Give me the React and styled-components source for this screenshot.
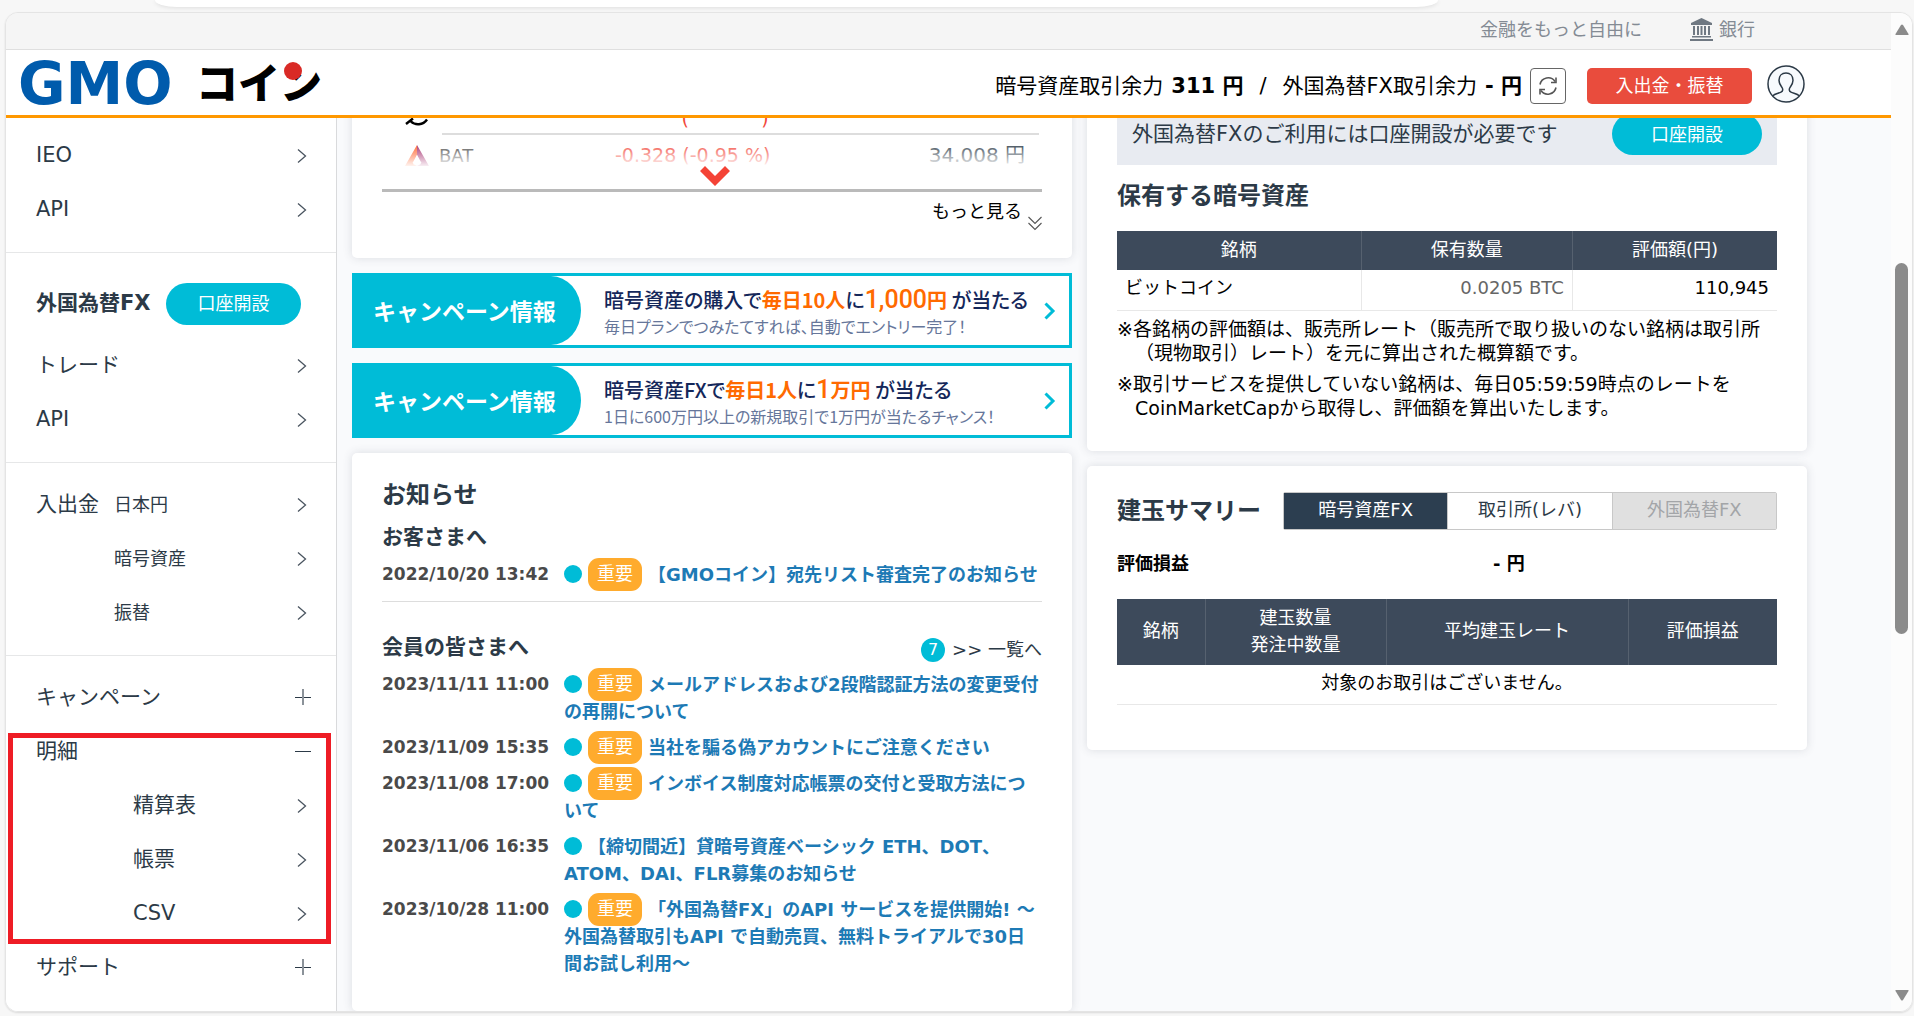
import React from "react";
import styled, { createGlobalStyle } from "styled-components";

const GlobalStyle = createGlobalStyle`
  *, *::before, *::after { box-sizing: border-box; }
  html, body { margin: 0; height: 100%; }
  body {
    background: #f7f7f7;
    color: #000;
    font-family: "DejaVu Sans", "Noto Sans CJK JP", sans-serif;
    font-size: 18px;
    line-height: 27px;
    overflow: hidden;
  }
  h2, h3, p, ul, dl, dd, dt { margin: 0; padding: 0; }
  ul { list-style: none; }
  a { color: inherit; text-decoration: none; }
  button { font: inherit; color: inherit; cursor: pointer; }
  svg { display: block; flex: none; }
`;

const cyan = "#00bcd7";
const ink = "#2c3a47";

/* ---------- browser frame ---------- */
const Screen = styled.div`
  height: 100vh;
  display: flex;
  flex-direction: column;
  padding: 0 1px 4px 5px;
  overflow: hidden;
`;
const AddressStrip = styled.div`
  height: 7px;
  margin: 0 475px 5px 150px;
  background: #fff;
  border-radius: 0 0 22px 22px / 0 0 7px 7px;
  box-shadow: 0 1px 4px rgba(0, 0, 0, 0.1);
  flex: none;
`;
const Viewport = styled.div`
  flex: 1;
  min-height: 0;
  display: flex;
  border: 1px solid #e4e4e4;
  border-radius: 13px;
  overflow: hidden;
  box-shadow: 0 1px 2px rgba(0, 0, 0, 0.12);
`;
const Page = styled.div`
  flex: 1;
  min-width: 0;
  display: flex;
  flex-direction: column;
`;
const ScrollTrack = styled.div`
  width: 21px;
  background: #fcfcfc;
  display: flex;
  flex-direction: column;
  align-items: center;
  justify-content: space-between;
  padding: 11px 0 10px;
`;
const ScrollBody = styled.div`
  flex: 1;
  padding-top: 228px;
`;
const ScrollThumb = styled.div`
  width: 13px;
  height: 371px;
  border-radius: 7px;
  background: #8b8b8b;
`;

/* ---------- header ---------- */
const TopBar = styled.div`
  height: 37px;
  flex: none;
  display: flex;
  justify-content: flex-end;
  align-items: center;
  gap: 48px;
  padding: 0 136px 4px 0;
  background: #f5f5f5;
  border-bottom: 1px solid #dfdfdf;
  color: #848b94;
`;
const BankLink = styled.a`
  display: flex;
  align-items: center;
  gap: 6px;
`;
const Header = styled.header`
  height: 68px;
  flex: none;
  display: flex;
  align-items: center;
  padding: 2px 86px 0 12px;
  background: #fff;
  border-bottom: 3px solid #ff9800;
  position: relative;
  z-index: 2;
`;
const LogoLink = styled.a`
  margin-right: auto;
`;
const Balance = styled.p`
  display: flex;
  gap: 8px;
  font-size: 21px;
  padding-top: 5px;
  margin-right: 8px;
`;
const Slash = styled.span`
  margin: 0 8px;
`;
const RefreshButton = styled.button`
  width: 36px;
  height: 36px;
  display: grid;
  place-items: center;
  padding: 0;
  background: #fff;
  border: 1px solid #666;
  border-radius: 4px;
  margin-right: 21px;
  margin-top: 4px;
`;
const TransferButton = styled.button`
  width: 165px;
  height: 36px;
  padding: 0;
  border: 0;
  border-radius: 5px;
  background: #e94c3d;
  color: #fff;
  margin-right: 15px;
  margin-top: 4px;
`;
const AccountButton = styled.button`
  padding: 0;
  border: 0;
  background: none;
`;

/* ---------- sidebar ---------- */
const Body = styled.div`
  flex: 1;
  min-height: 0;
  display: flex;
  background: #f9fafc;
`;
const Sidebar = styled.nav`
  width: 331px;
  flex: none;
  background: #fff;
  border-right: 1px solid #d9dadc;
  color: ${ink};
  overflow: hidden;
`;
const MenuSection = styled.section`
  padding: ${(p) => (p.$first ? 10 : 14)}px 0 16px;
  border-bottom: ${(p) => (p.$last ? 0 : 1)}px solid #e6e7e8;
`;
const MenuRow = styled.a`
  height: 54px;
  display: flex;
  align-items: center;
  padding: 0 29px 0 ${(p) => (p.$sub ? 127 : 30)}px;
  font-size: 21px;
`;
const MenuToggle = styled.button`
  width: 100%;
  height: 54px;
  display: flex;
  align-items: center;
  padding: 0 25px 0 30px;
  border: 0;
  background: none;
  font-size: 21px;
`;
const MenuName = styled.span`
  flex: 1;
  text-align: left;
`;
const GroupName = styled.span`
  width: 78px;
`;
const SmallName = styled.span`
  flex: 1;
  font-size: 18px;
`;
const FxHead = styled.div`
  height: 71px;
  display: flex;
  align-items: center;
  justify-content: space-between;
  padding: 2px 35px 0 30px;
  font-size: 21px;
  font-weight: 700;
`;
const OpenButton = styled.button`
  width: ${(p) => p.$w}px;
  height: 42px;
  flex: none;
  padding: 0;
  border: 0;
  border-radius: 21px;
  background: ${cyan};
  color: #fff;
  font-size: 18px;
  font-weight: 400;
`;
const MarkedGroup = styled.div`
  position: relative;
`;
const Marker = styled.div`
  position: absolute;
  inset: 9px 5px -4px 2px;
  border: 5px solid #ee1c25;
  pointer-events: none;
`;

/* ---------- main ---------- */
const Main = styled.main`
  flex: 1;
  min-width: 0;
  display: grid;
  grid-template-columns: 1fr 1fr;
  gap: 15px;
  padding: 0 84px 0 15px;
  margin-top: -15px;
`;
const Column = styled.div`
  min-width: 0;
  min-height: 0;
  display: flex;
  flex-direction: column;
  gap: 15px;
`;
const Card = styled.section`
  background: #fff;
  border-radius: 5px;
  padding: 0 30px;
  box-shadow: 0 0 10px rgba(60, 70, 90, 0.16);
  flex: ${(p) => (p.$grow ? 1 : "none")};
`;

/* rates */
const Rates = styled.div`
  height: 89px;
  padding: 0 3px 0 23px;
  display: flex;
  flex-direction: column;
  border-bottom: 3px solid #bababa;
  position: relative;
`;
const RateRow = styled.div`
  display: grid;
  grid-template-columns: 34px 1fr 220px 204px;
  align-items: center;
  height: ${(p) => p.$h}px;
`;
const RateRule = styled.div`
  height: 2px;
  margin-left: 37px;
  background: #ddd;
`;
const RateName = styled.span`
  color: #444;
`;
const RateChange = styled.span`
  color: #f2483b;
  font-size: 19px;
  white-space: pre;
`;
const RatePrice = styled.span`
  color: ${ink};
  font-size: 20px;
  text-align: right;
  padding-right: 14px;
`;
const Fade = styled.div`
  position: absolute;
  inset: 33px 0 0 0;
  display: flex;
  align-items: flex-end;
  justify-content: center;
  padding: 0 0 3px 6px;
  background: linear-gradient(rgba(255, 255, 255, 0.1) 8px, #fff 32px);
`;
const MoreLink = styled.a`
  display: flex;
  justify-content: flex-end;
  align-items: center;
  gap: 6px;
  height: 66px;
  padding-bottom: 27px;
  svg { align-self: flex-end; }
`;

/* banners */
const Banner = styled.a`
  height: 75px;
  flex: none;
  display: flex;
  align-items: center;
  background: #fff;
  border: 3px solid ${cyan};
  padding-right: 13px;
  font-family: "Noto Sans CJK JP", sans-serif;
  font-feature-settings: "palt";
`;
const BannerTag = styled.span`
  width: 226px;
  height: 100%;
  flex: none;
  display: grid;
  align-items: center;
  padding-left: 18px;
  background: ${cyan};
  border-radius: 0 30px 30px 0 / 0 50% 50% 0;
  color: #fff;
  font-size: 23px;
  font-weight: 700;
  font-feature-settings: normal;
`;
const BannerText = styled.span`
  flex: 1;
  padding-left: 23px;
  white-space: nowrap;
`;
const BannerLead = styled.span`
  display: block;
  color: #14275a;
  font-size: 20px;
  font-weight: 500;
  line-height: 30px;
`;
const Hot = styled.b`
  color: #ff6a00;
  font-weight: 700;
`;
const HotNumber = styled.span`
  color: #ff6a00;
  font-family: Roboto, sans-serif;
  font-size: 25px;
  font-weight: 500;
`;
const BannerSub = styled.span`
  display: block;
  color: #66769a;
  font-size: 16px;
  line-height: 22px;
`;

/* headings and news */
const Title = styled.h2`
  color: ${ink};
  font-size: 24px;
  line-height: 36px;
  font-weight: 700;
`;
const SubTitle = styled.h3`
  color: ${ink};
  font-size: 21px;
  line-height: 30px;
  font-weight: 700;
`;
const NewsList = styled.ul`
  display: flex;
  flex-direction: column;
  gap: 9px;
  font-weight: 700;
`;
const NewsItem = styled.li`
  display: grid;
  grid-template-columns: 182px 1fr;
`;
const NewsDate = styled.time`
  color: #4a4a4a;
  font-size: 17px;
`;
const NewsLink = styled.a`
  color: #1d7ab5;
`;
const Dot = styled.i`
  display: inline-block;
  width: 18px;
  height: 18px;
  margin-right: 6px;
  border-radius: 50%;
  background: ${cyan};
  vertical-align: -2px;
`;
const Badge = styled.span`
  display: inline-block;
  height: 33px;
  line-height: 31px;
  padding: 0 9px;
  margin: -8px 6px -4px 0;
  border-radius: 11px;
  background: #ffab2d;
  color: #fff;
  font-weight: 400;
  vertical-align: middle;
`;
const NewsTop = styled.div`
  display: flex;
  flex-direction: column;
  padding: 24px 0 13px;
  border-bottom: 1px solid #ddd;
  gap: 9px;
`;
const NewsHead = styled.div`
  display: flex;
  align-items: center;
  justify-content: space-between;
  padding: 28px 0 8px;
`;
const ListLink = styled.a`
  display: flex;
  align-items: center;
  gap: 7px;
  padding-top: 6px;
  color: ${ink};
`;
const Count = styled.span`
  width: 24px;
  height: 24px;
  line-height: 24px;
  border-radius: 50%;
  background: ${cyan};
  color: #fff;
  font-size: 16px;
  text-align: center;
`;

/* right column */
const Notice = styled.div`
  display: flex;
  align-items: center;
  justify-content: space-between;
  height: 62px;
  padding: 0 15px;
  background: #e8ebf1;
  color: ${ink};
  font-size: 21px;
`;
const HoldingHead = styled.div`
  padding: 13px 0 17px;
`;
const Table = styled.table`
  width: 100%;
  border-collapse: collapse;
  table-layout: fixed;
  th {
    height: ${(p) => p.$head}px;
    padding: 0 0 2px;
    background: #3d4a5b;
    color: #fff;
    font-weight: 400;
    text-align: center;
  }
  td {
    height: 40px;
    padding: 0 8px 4px;
    border-bottom: 1px solid #e8e8e8;
  }
  th + th { border-left: 1px solid #56616f; }
  td + td { border-left: 1px solid #e8e8e8; }
`;
const Cell = styled.td`
  text-align: ${(p) => p.$align || "left"};
  color: ${(p) => (p.$muted ? "#666" : "#000")};
`;
const Notes = styled.div`
  padding: 6px 0 31px;
  display: flex;
  flex-direction: column;
  gap: 7px;
  font-size: 19px;
  line-height: 24px;
`;
const Note = styled.p`
  padding-left: 18px;
  text-indent: -18px;
`;
const SummaryHead = styled.div`
  display: flex;
  align-items: center;
  gap: 22px;
  padding: 26px 0 20px;
`;
const Tabs = styled.div`
  flex: 1;
  height: 38px;
  display: flex;
  border: 1px solid #c8c8c8;
  border-radius: 2px;
`;
const Tab = styled.button`
  flex: 1;
  padding: 0 0 2px;
  border: 0;
  border-right: ${(p) => (p.$last ? 0 : 1)}px solid #c8c8c8;
  background: ${(p) => (p.$on ? "#2c3e50" : p.disabled ? "#e0e0e0" : "#fff")};
  color: ${(p) => (p.$on ? "#fff" : p.disabled ? "#a3a5a8" : ink)};
`;
const ProfitRow = styled.dl`
  display: grid;
  grid-template-columns: 1fr 1fr;
  padding-bottom: 22px;
  font-weight: 700;
  dd { padding-left: 46px; }
`;
const TableEnd = styled.div`
  height: 45px;
`;

/* ---------- icons ---------- */
const Chevron = () => (
  <svg width="10" height="15" viewBox="0 0 10 15" fill="none" stroke="#4a5560" strokeWidth="1.3">
    <path d="M1 1.5 8.5 8 1 14.5" />
  </svg>
);
const Sign = ({ plus }) => (
  <svg width="16" height="16" viewBox="0 0 16 16" fill="none" strokeWidth="1">
    <path d="M0 8.5H16" stroke="#2c3a47" />
    {plus && <path d="M8 0V16" stroke="#8b9299" strokeWidth="2" />}
  </svg>
);
const Bank = () => (
  <svg width="23" height="23" viewBox="0 0 23 23" fill="#6f7882">
    <path d="M11.5 0 22 5v2H1V5z" />
    <path d="M3 8h2v9H3zM7 8h2v9H7zM10.500 8h2v9h-2zM14 8h2v9h-2zM18 8h2v9h-2zM2 18h19v1.500H2zM0 21h23v2H0z" />
  </svg>
);
const Refresh = () => (
  <svg width="22" height="22" viewBox="0 0 22 22" fill="none" stroke="#555" strokeWidth="1.6">
    <path d="M3 9.500A8.300 8.300 0 0 1 18 6.500M19 12.500A8.300 8.300 0 0 1 4 15.500" />
    <path d="M19 2.500V7.500H14M3 19.500V14.500H8" />
  </svg>
);
const Person = () => (
  <svg width="38" height="38" viewBox="0 0 38 38" fill="none" stroke="#2c3a47" strokeWidth="1.500">
    <circle cx="19" cy="19" r="18" fill="#f7fafd" />
    <path d="M5.500 31c2.500-2.500 6-2.500 8.500-3.800 2.300-1.200 2-3.200.8-5-1.800-2.300-2.800-4.500-2.800-7C12 11 14.800 8 19 8s7 3 7 7.200c0 2.500-1 4.700-2.800 7-1.200 1.800-1.500 3.800.8 5 2.500 1.300 6 1.300 8.500 3.800" />
  </svg>
);
const DoubleDown = () => (
  <svg width="14" height="15" viewBox="0 0 14 15" fill="none" stroke="#555" strokeWidth="1.1">
    <path d="M0.500 1 7 7.500 13.500 1M0.500 7 7 13.500 13.500 7" />
  </svg>
);
const BigDown = () => (
  <svg width="30" height="20" viewBox="0 0 30 20" fill="#f44336">
    <path d="M0 5 5 0 15 10 25 0 30 5 15 20z" />
  </svg>
);
const BannerArrow = () => (
  <svg width="12" height="18" viewBox="0 0 12 18" fill="none" stroke={cyan} strokeWidth="3">
    <path d="M1.500 1.500 9 9 1.500 16.500" />
  </svg>
);
const BatIcon = () => (
  <svg width="24" height="21" viewBox="0 0 24 21">
    <path d="M12 0 0 21h12l-4-2 4-9z" fill="#ff5a1f" />
    <path d="M12 0v10l4 9-4 2h12z" fill="#9e1f63" />
    <path d="M12 10 7.500 18h9z" fill="#fff" />
  </svg>
);
const CoinEdge = () => (
  <svg width="24" height="22" viewBox="0 0 24 22" fill="none" stroke="#000" strokeWidth="2.400">
    <path d="M1 17 8 11.500M6 14.500c4 4 12 4 16-2M2 8c4-7 16-7 20 0" />
  </svg>
);
const Triangle = ({ down }) => (
  <svg width="14" height="11" viewBox="0 0 14 11" fill="#8b8b8b">
    <path d={down ? "M1 0h12q1 0 .5 1L8 10q-1 1-2 0L.5 1Q0 0 1 0z" : "M1 11h12q1 0 .5-1L8 1Q7 0 6 1L.5 10q-.5 1 .5 1z"} />
  </svg>
);
const Logo = () => (
  <svg width="304" height="60" viewBox="0 0 304 60" role="img" aria-label="GMOコイン">
    <text x="0" y="50" fill="#005bac" fontFamily="DejaVu Sans" fontSize="58" fontWeight="700">GMO</text>
    <text x="178" y="45" fill="#000" fontFamily="Noto Sans CJK JP" fontSize="42" fontWeight="900">コイン</text>
    <ellipse cx="275" cy="17" rx="9" ry="9" fill="#d92a26" />
  </svg>
);

/* ---------- data ---------- */
const news = [
  { date: "2023/11/11 11:00", important: true, text: "メールアドレスおよび2段階認証方法の変更受付の再開について" },
  { date: "2023/11/09 15:35", important: true, text: "当社を騙る偽アカウントにご注意ください" },
  { date: "2023/11/08 17:00", important: true, text: "インボイス制度対応帳票の交付と受取方法について" },
  { date: "2023/11/06 16:35", important: false, text: "【締切間近】貸暗号資産ベーシック ETH、DOT、ATOM、DAI、FLR募集のお知らせ" },
  { date: "2023/10/28 11:00", important: true, text: "「外国為替FX」のAPI サービスを提供開始! ～外国為替取引もAPI で自動売買、無料トライアルで30日間お試し利用～" },
];

const NewsRow = ({ item }) => (
  <NewsItem>
    <NewsDate>{item.date}</NewsDate>
    <NewsLink href="#">
      <Dot />
      {item.important && <Badge>重要</Badge>}
      {item.text}
    </NewsLink>
  </NewsItem>
);

const Item = ({ children, sub }) => (
  <MenuRow href="#" $sub={sub}>
    <MenuName>{children}</MenuName>
    <Chevron />
  </MenuRow>
);

export default function App() {
  return (
    <Screen>
      <GlobalStyle />
      <AddressStrip />
      <Viewport>
        <Page>
          <TopBar>
            <span>金融をもっと自由に</span>
            <BankLink href="#"><Bank />銀行</BankLink>
          </TopBar>
          <Header>
            <LogoLink href="#"><Logo /></LogoLink>
            <Balance>
              <span>暗号資産取引余力</span>
              <b>311 円</b>
              <Slash>/</Slash>
              <span>外国為替FX取引余力</span>
              <b>- 円</b>
            </Balance>
            <RefreshButton aria-label="更新"><Refresh /></RefreshButton>
            <TransferButton>入出金・振替</TransferButton>
            <AccountButton aria-label="アカウント"><Person /></AccountButton>
          </Header>
          <Body>
            <Sidebar>
              <MenuSection $first>
                <Item>IEO</Item>
                <Item>API</Item>
              </MenuSection>
              <MenuSection>
                <FxHead>
                  外国為替FX
                  <OpenButton $w={135}>口座開設</OpenButton>
                </FxHead>
                <Item>トレード</Item>
                <Item>API</Item>
              </MenuSection>
              <MenuSection>
                {["日本円", "暗号資産", "振替"].map((name, i) => (
                  <MenuRow href="#" key={name}>
                    <GroupName>{i === 0 ? "入出金" : ""}</GroupName>
                    <SmallName>{name}</SmallName>
                    <Chevron />
                  </MenuRow>
                ))}
              </MenuSection>
              <MenuSection $last>
                <MenuToggle><MenuName>キャンペーン</MenuName><Sign plus /></MenuToggle>
                <MarkedGroup>
                  <MenuToggle><MenuName>明細</MenuName><Sign /></MenuToggle>
                  <Item sub>精算表</Item>
                  <Item sub>帳票</Item>
                  <Item sub>CSV</Item>
                  <Marker />
                </MarkedGroup>
                <MenuToggle><MenuName>サポート</MenuName><Sign plus /></MenuToggle>
              </MenuSection>
            </Sidebar>
            <Main>
              <Column>
                <Card>
                  <Rates>
                    <RateRow $h={30}>
                      <CoinEdge />
                      <span />
                      <RateChange>{"           (            )"}</RateChange>
                    </RateRow>
                    <RateRule />
                    <RateRow $h={40}>
                      <BatIcon />
                      <RateName>BAT</RateName>
                      <RateChange>-0.328 (-0.95 %)</RateChange>
                      <RatePrice>34.008 円</RatePrice>
                    </RateRow>
                    <Fade><BigDown /></Fade>
                  </Rates>
                  <MoreLink href="#">もっと見る<DoubleDown /></MoreLink>
                </Card>
                <Banner href="#">
                  <BannerTag>キャンペーン情報</BannerTag>
                  <BannerText>
                    <BannerLead>
                      暗号資産の購入で<Hot>毎日10人</Hot>に<HotNumber>1,000</HotNumber><Hot>円</Hot> が当たる
                    </BannerLead>
                    <BannerSub>毎日プランでつみたてすれば、自動でエントリー完了！</BannerSub>
                  </BannerText>
                  <BannerArrow />
                </Banner>
                <Banner href="#">
                  <BannerTag>キャンペーン情報</BannerTag>
                  <BannerText>
                    <BannerLead>
                      暗号資産FXで<Hot>毎日1人</Hot>に<HotNumber>1</HotNumber><Hot>万円</Hot> が当たる
                    </BannerLead>
                    <BannerSub>1日に600万円以上の新規取引で1万円が当たるチャンス！</BannerSub>
                  </BannerText>
                  <BannerArrow />
                </Banner>
                <Card $grow>
                  <NewsTop>
                    <Title>お知らせ</Title>
                    <SubTitle>お客さまへ</SubTitle>
                    <NewsList>
                      <NewsRow item={{ date: "2022/10/20 13:42", important: true, text: "【GMOコイン】宛先リスト審査完了のお知らせ" }} />
                    </NewsList>
                  </NewsTop>
                  <NewsHead>
                    <SubTitle>会員の皆さまへ</SubTitle>
                    <ListLink href="#"><Count>7</Count>&gt;&gt; 一覧へ</ListLink>
                  </NewsHead>
                  <NewsList>
                    {news.map((n) => <NewsRow key={n.date} item={n} />)}
                  </NewsList>
                </Card>
              </Column>
              <Column>
                <Card>
                  <Notice>
                    外国為替FXのご利用には口座開設が必要です
                    <OpenButton $w={150}>口座開設</OpenButton>
                  </Notice>
                  <HoldingHead><Title>保有する暗号資産</Title></HoldingHead>
                  <Table $head={39}>
                    <colgroup><col width="37%" /><col width="32%" /><col width="31%" /></colgroup>
                    <thead>
                      <tr><th>銘柄</th><th>保有数量</th><th>評価額(円)</th></tr>
                    </thead>
                    <tbody>
                      <tr>
                        <Cell>ビットコイン</Cell>
                        <Cell $align="right" $muted>0.0205 BTC</Cell>
                        <Cell $align="right">110,945</Cell>
                      </tr>
                    </tbody>
                  </Table>
                  <Notes>
                    <Note>※各銘柄の評価額は、販売所レート（販売所で取り扱いのない銘柄は取引所（現物取引）レート）を元に算出された概算額です。</Note>
                    <Note>※取引サービスを提供していない銘柄は、毎日05:59:59時点のレートをCoinMarketCapから取得し、評価額を算出いたします。</Note>
                  </Notes>
                </Card>
                <Card>
                  <SummaryHead>
                    <Title>建玉サマリー</Title>
                    <Tabs>
                      <Tab $on>暗号資産FX</Tab>
                      <Tab>取引所(レバ)</Tab>
                      <Tab $last disabled>外国為替FX</Tab>
                    </Tabs>
                  </SummaryHead>
                  <ProfitRow><dt>評価損益</dt><dd>- 円</dd></ProfitRow>
                  <Table $head={66}>
                    <colgroup><col width="88" /><col width="181" /><col width="242" /><col width="149" /></colgroup>
                    <thead>
                      <tr><th>銘柄</th><th>建玉数量<br />発注中数量</th><th>平均建玉レート</th><th>評価損益</th></tr>
                    </thead>
                    <tbody>
                      <tr><Cell colSpan={4} $align="center">対象のお取引はございません。</Cell></tr>
                    </tbody>
                  </Table>
                  <TableEnd />
                </Card>
              </Column>
            </Main>
          </Body>
        </Page>
        <ScrollTrack>
          <Triangle />
          <ScrollBody><ScrollThumb /></ScrollBody>
          <Triangle down />
        </ScrollTrack>
      </Viewport>
    </Screen>
  );
}
